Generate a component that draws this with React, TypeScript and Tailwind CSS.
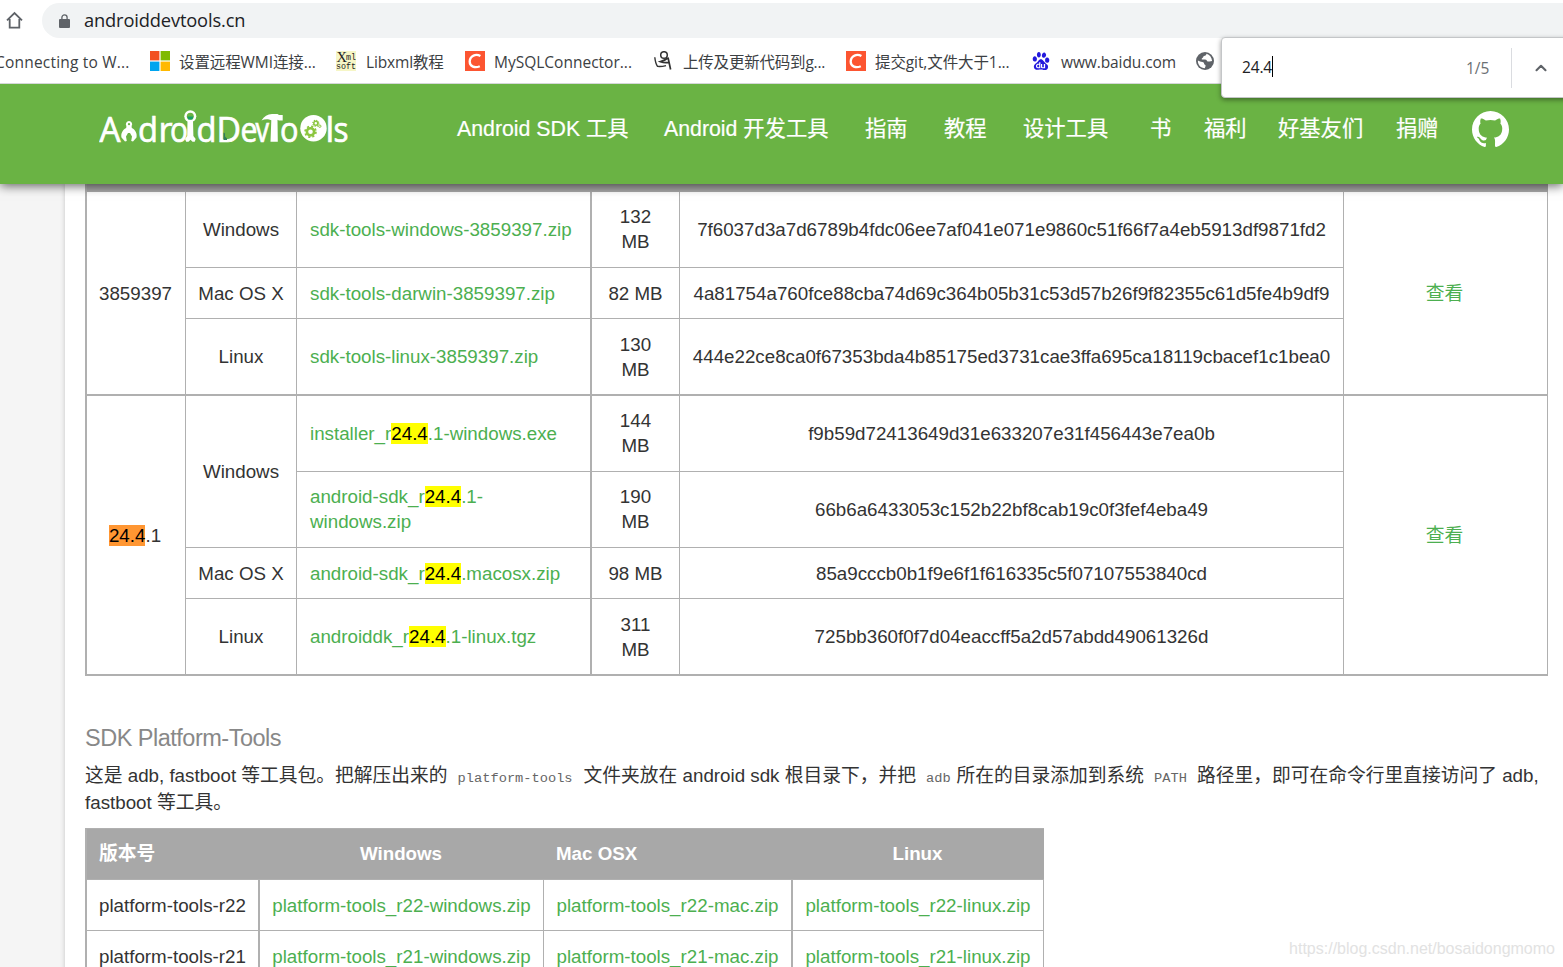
import type { ReactNode } from 'react';
import { SiGithub, SiBaidu } from 'react-icons/si';
import { ChevronUp } from 'lucide-react';

const bookmarks = [
  { label: '设置远程WMI连接...', icon: 'ms', box: 'w-[186px] gap-[9px]', text: 'tracking-[-0.1px]' },
  { label: 'Libxml教程', icon: 'xml', box: 'w-[129px] gap-[10px]', text: 'tracking-[-0.15px]' },
  { label: 'MySQLConnector...', icon: 'csdn', box: 'w-[189px] gap-[9px]', text: 'tracking-[0px]' },
  { label: '上传及更新代码到g...', icon: 'sketch', box: 'w-[192px] gap-[9px]', text: 'tracking-[-0.2px]' },
  { label: '提交git,文件大于1...', icon: 'csdn', box: 'w-[185px] gap-[9px]', text: 'tracking-[-0.1px]' },
  { label: 'www.baidu.com', icon: 'baidu', box: 'w-[165px] gap-[10px]', text: 'tracking-[-0.1px]' },
];

const navItems = [
  { label: 'Android SDK 工具', box: 'w-[207px]' },
  { label: 'Android 开发工具', box: 'w-[201px]' },
  { label: '指南', box: 'w-[79px]' },
  { label: '教程', box: 'w-[79px]' },
  { label: '设计工具', box: 'w-[127px]' },
  { label: '书', box: 'w-[54px]' },
  { label: '福利', box: 'w-[74px]' },
  { label: '好基友们', box: 'w-[118px]' },
  { label: '捐赠', box: 'w-[76px]' },
];

const platformTools = ['r22', 'r21'];

function BookmarkIcon({ name }: { name: string }) {
  if (name === 'ms') {
    return (
      <svg className="h-5 w-5 shrink-0" viewBox="0 0 20 20">
        <path d="M0 0h9.4v9.4H0z" fill="#f25022" />
        <path d="M10.6 0H20v9.4h-9.4z" fill="#7fba00" />
        <path d="M0 10.6h9.4V20H0z" fill="#00a4ef" />
        <path d="M10.6 10.6H20V20h-9.4z" fill="#ffb900" />
      </svg>
    );
  }
  if (name === 'xml') {
    return (
      <svg className="h-5 w-5 shrink-0 bg-[#f6f6c6]" viewBox="0 0 20 20" fill="#222">
        <text x="0.500" y="11" fontSize="14" fontFamily="Liberation Serif" textLength="10.500" lengthAdjust="spacingAndGlyphs">X</text>
        <text x="10" y="9" fontSize="9.500" fontFamily="Liberation Mono" textLength="10" lengthAdjust="spacingAndGlyphs">ml</text>
        <text x="0" y="18" fontSize="9.500" fontFamily="Liberation Mono" textLength="20" lengthAdjust="spacingAndGlyphs">soft</text>
      </svg>
    );
  }
  if (name === 'csdn') {
    return (
      <svg className="h-5 w-5 shrink-0" viewBox="0 0 20 20">
        <path d="M0 0h20v20H0z" fill="#fc5531" />
        <path d="M15.4 5.1C11 2.500 5 4.600 4.700 10.400c0 5.300 5.300 7 10.100 4.800" fill="none" stroke="#fff" strokeWidth="2.300" />
      </svg>
    );
  }
  if (name === 'sketch') {
    return (
      <svg className="h-5 w-5 shrink-0" viewBox="0 0 20 20" fill="none" stroke="#333">
        <circle cx="10" cy="4" r="3.300" strokeWidth="1.500" />
        <path d="M.8 6.200c.4 4 1.200 7 2.700 9.200 2.500.3 5.500 0 8.500-.8" strokeWidth="1.400" />
        <path d="M14 6.500 16.600 18.500M13.800 7C12 8.500 9 10 6.500 10.600c2.500 1 5.500 1.200 8.300.8" strokeWidth="1.700" />
      </svg>
    );
  }
  return <SiBaidu className="h-5 w-5 shrink-0 p-px text-[#2319dc]" />;
}

function Logo() {
  return (
    <svg
      className="h-10 w-[250px]"
      viewBox="99 108 250 40"
      fill="#fff"
      fontFamily="'Open Sans', sans-serif"
      fontSize="34.500"
    >
      <g stroke="#fff" strokeWidth="0.700">
        <text x="99.500" y="141.500" textLength="21" lengthAdjust="spacingAndGlyphs">A</text>
        <text x="138" y="141.500" textLength="20" lengthAdjust="spacingAndGlyphs">d</text>
        <text x="158.500" y="141.500">r</text>
        <text x="170" y="141.500" textLength="18" lengthAdjust="spacingAndGlyphs">o</text>
        <text x="196.500" y="141.500" textLength="20" lengthAdjust="spacingAndGlyphs">d</text>
        <text x="216.500" y="141.500" textLength="24.500" lengthAdjust="spacingAndGlyphs">D</text>
        <text x="240.500" y="141.500" textLength="17" lengthAdjust="spacingAndGlyphs">e</text>
        <text x="255.500" y="141.500" textLength="13.500" lengthAdjust="spacingAndGlyphs">v</text>
        <text x="280" y="141.500" textLength="18.500" lengthAdjust="spacingAndGlyphs">o</text>
        <text x="325.500" y="141.500">l</text>
        <text x="333.500" y="141.500" textLength="15" lengthAdjust="spacingAndGlyphs">s</text>
      </g>
      {/* pliers standing in for the n */}
      <path d="M129 121a3.200 3.200 0 0 0-2.600 5l-.2 2c-4 2-5.500 6-4.700 9.500l3.500 4 1.800-.4-.8-4.600 2-3.500h2l2 3.500-.8 4.600 1.800.4 3.500-4c.8-3.500-.7-7.500-4.700-9.500l-.2-2a3.200 3.200 0 0 0-2.600-5z" />
      <circle cx="129" cy="124.200" r="1.100" fill="#6ab344" />
      {/* wrench standing in for the i */}
      <path d="M187.500 120.500h5.500l.4 15.500 2.300 3-1 2.700h-2.200l-2-2-2 2h-2.300l-1.200-2.700 2.200-3z" />
      <circle cx="190.300" cy="116.300" r="6" />
      <circle cx="190.300" cy="116.300" r="3.500" fill="#6ab344" />
      <path d="M187.300 116.500h6l-1 3h-4z" fill="#16a06a" />
      <path d="M223.500 132.500l1.500 1v3l2 2v1.500h-3.500z" fill="#2f7d5c" />
      {/* hammer standing in for the T */}
      <path d="M261.500 120.500c2.500-4 6-6.300 10.500-6.500h5.500l1.500 1h3.700v5.500H279l-1.500-.8.300 22h-7.300l.8-21.500-2.300-.8c-2.500-.4-5-.2-7.500 1.100z" />
      <circle cx="313.500" cy="128.200" r="13.200" />
      <g fill="none" stroke="#8cc63f">
        <circle cx="310.500" cy="131.800" r="3.600" strokeWidth="2.600" />
        <circle cx="310.500" cy="131.800" r="5.400" strokeWidth="1.800" strokeDasharray="2.120 2.120" />
        <circle cx="315.800" cy="123.300" r="2" strokeWidth="1.500" />
        <circle cx="315.800" cy="123.300" r="3" strokeWidth="1.200" strokeDasharray="1.180 1.180" />
        <circle cx="319.800" cy="126.200" r="1.200" strokeWidth="1" />
      </g>
    </svg>
  );
}

function Cell({ className = '', children }: { className?: string; children: ReactNode }) {
  return (
    <div className={`flex items-center justify-center border-r border-b border-[#b0b0b0] px-3 text-center ${className}`}>
      <div>{children}</div>
    </div>
  );
}

function LinkCell({ className = '', children }: { className?: string; children: ReactNode }) {
  return (
    <div className={`flex items-center border-r-2 border-b border-[#b0b0b0] pl-[13px] text-[#4caf50] ${className}`}>
      <a href="#">{children}</a>
    </div>
  );
}

function Hit() {
  return <mark className="bg-[#ffff00] text-black">24.4</mark>;
}

function Code({ className, children }: { className: string; children: ReactNode }) {
  return (
    <code className={`font-['Liberation_Mono',monospace] text-[13.7px] leading-none text-[#666] ${className}`}>{children}</code>
  );
}

export default function App() {
  return (
    <div className="relative flex h-[967px] w-[1563px] flex-col overflow-hidden bg-[#f5f5f5] font-['Liberation_Sans','Noto_Sans_CJK_SC',sans-serif] text-[18.75px] leading-[25px] text-[#333]">
      {/* Browser toolbar */}
      <div className="relative z-20 h-[84px] shrink-0 border-b border-[#d5d7d9] bg-white font-['Open_Sans','Noto_Sans_CJK_SC',sans-serif]">
        <div className="flex h-[38px] items-start pt-[3px]">
          <svg className="mt-2 ml-[6px] h-[18px] w-[18px]" viewBox="0 0 18 18" fill="none" stroke="#5f6368" strokeWidth="1.800">
            <path d="M1 9.300 8.500 2 16 9.300M3.700 8v8.600h9.600V8" />
          </svg>
          <div className="ml-[18px] flex h-[35px] flex-1 items-center rounded-l-full bg-[#f1f3f4] pl-[17px] text-[#202124]">
            <svg className="h-[14px] w-[11px]" viewBox="0 0 11 14" fill="#5f6368">
              <path d="M1 5h9a1 1 0 0 1 1 1v7a1 1 0 0 1-1 1H1a1 1 0 0 1-1-1V6a1 1 0 0 1 1-1z" />
              <path d="M2.900 6V3.500a2.600 2.600 0 0 1 5.200 0V6" fill="none" stroke="#5f6368" strokeWidth="1.300" />
            </svg>
            <span className="mb-0.5 ml-[14px] text-[18.300px] tracking-[-0.15px]">androiddevtools.cn</span>
          </div>
        </div>
        <div className="flex h-[46px] items-center whitespace-nowrap text-[15.500px] text-[#3c4043]">
          <div className="ml-[-5px] w-[155px] pt-0.5 tracking-[0.2px]">Connecting to W...</div>
          {bookmarks.map((b) => (
            <div key={b.label} className={`flex shrink-0 items-center ${b.box}`}>
              <BookmarkIcon name={b.icon} />
              <span className={`pt-0.5 ${b.text}`}>{b.label}</span>
            </div>
          ))}
          <svg className="h-[18px] w-[18px] shrink-0" viewBox="0 0 18 18">
            <circle cx="9" cy="9" r="9" fill="#5f6368" />
            <path d="M10.500 1.800c-.3 1.700-1.300 2-2.500 2.200-.8.200-.6 1.600-1.600 1.900-1 .4-1 1.500.2 1.700 1.600.3 3.600-.3 4.200 1 .4 1.300 1.500 1 2.700.8.900-.1 1.700 0 2.600-.4-.3-3.600-2.500-6.300-5.600-7.200z" fill="#fff" />
            <path d="M1.900 8.500c1.400.9 3 1.400 4.400 1.600 1.400.2 2 1.100 1.800 2 .4.800 1.700.7 1.500 2l-.8 2.200c-4-.2-7.200-3.500-6.900-7.800z" fill="#fff" />
          </svg>
        </div>
      </div>

      {/* Find in page */}
      <div className="absolute top-[37px] left-[1221px] z-30 flex h-[61px] w-[360px] items-center rounded border border-[#c4c6c8] bg-white font-['Open_Sans',sans-serif] text-[15.500px] shadow-[0_2px_5px_rgba(0,0,0,0.4)]">
        <span className="ml-5 w-[224px] text-[#202124]">
          <span className="inline-block border-r border-black pt-px leading-5 tracking-[-0.15px]">24.4</span>
        </span>
        <span className="w-[45px] pt-0.5 text-[#6b6f73]">1/5</span>
        <span className="h-10 w-px bg-[#dadce0]" />
        <ChevronUp className="ml-5 h-[18px] w-[18px] text-[#5f6368]" strokeWidth={2.800} />
      </div>

      {/* Site header */}
      <header className="relative z-10 flex h-[100px] shrink-0 items-start bg-[#6ab344] pl-[99px] text-white shadow-[0_2px_10px_rgba(0,0,0,0.600)]">
        <div className="mt-6 w-[358px]">
          <Logo />
        </div>
        <nav className="flex pt-8 text-[21.300px] leading-[26px]">
          {navItems.map((item) => (
            <a key={item.label} href="#" className={`shrink-0 whitespace-nowrap [-webkit-text-stroke:0.2px_white] ${item.box}`}>
              {item.label}
            </a>
          ))}
        </nav>
        <SiGithub className="mt-[26px] h-[38px] w-[37px] shrink-0" />
      </header>

      <main className="ml-[65px] flex-1 bg-white pl-5 shadow-[0_0_5px_rgba(0,0,0,0.200)]">
        <div className="w-[1463px] border-l-2 border-[#b0b0b0]">
          <div className="h-2 bg-[#a8a8a8]" />
          <div className="grid grid-cols-[99px_111px_295px_88px_664px_204px] grid-rows-[76px_51px_77px_76px_76px_51px_77px]">
            <Cell className="row-span-3 border-b-2 pr-[13px]">3859397</Cell>
            <Cell>Windows</Cell>
            <LinkCell>sdk-tools-windows-3859397.zip</LinkCell>
            <Cell className="pb-px">132 MB</Cell>
            <Cell>7f6037d3a7d6789b4fdc06ee7af041e071e9860c51f66f7a4eb5913df9871fd2</Cell>
            <Cell className="row-span-3 border-b-2 pr-[14px] text-[#4caf50]">查看</Cell>
            <Cell className="whitespace-nowrap">Mac OS X</Cell>
            <LinkCell>sdk-tools-darwin-3859397.zip</LinkCell>
            <Cell>82 MB</Cell>
            <Cell>4a81754a760fce88cba74d69c364b05b31c53d57b26f9f82355c61d5fe4b9df9</Cell>
            <Cell className="border-b-2">Linux</Cell>
            <LinkCell className="border-b-2">sdk-tools-linux-3859397.zip</LinkCell>
            <Cell className="border-b-2">130 MB</Cell>
            <Cell className="border-b-2">444e22ce8ca0f67353bda4b85175ed3731cae3ffa695ca18119cbacef1c1bea0</Cell>

            <Cell className="row-span-4 border-b-2 pr-[14px]">
              <mark className="bg-[#ff9632] text-black">24.4</mark>.1
            </Cell>
            <Cell className="row-span-2">Windows</Cell>
            <LinkCell>installer_r<Hit />.1-windows.exe</LinkCell>
            <Cell className="pb-px">144 MB</Cell>
            <Cell>f9b59d72413649d31e633207e31f456443e7ea0b</Cell>
            <Cell className="row-span-4 border-b-2 pr-[14px] text-[#4caf50]">查看</Cell>
            <LinkCell className="pb-px">android-sdk_r<Hit />.1-<br />windows.zip</LinkCell>
            <Cell className="pb-px">190 MB</Cell>
            <Cell>66b6a6433053c152b22bf8cab19c0f3fef4eba49</Cell>
            <Cell className="whitespace-nowrap">Mac OS X</Cell>
            <LinkCell>android-sdk_r<Hit />.macosx.zip</LinkCell>
            <Cell>98 MB</Cell>
            <Cell>85a9cccb0b1f9e6f1f616335c5f07107553840cd</Cell>
            <Cell className="border-b-2">Linux</Cell>
            <LinkCell className="border-b-2">androiddk_r<Hit />.1-linux.tgz</LinkCell>
            <Cell className="border-b-2">311 MB</Cell>
            <Cell className="border-b-2">725bb360f0f7d04eaccff5a2d57abdd49061326d</Cell>
          </div>
        </div>

        <h4 className="mt-[47px] text-[23.500px] leading-[30px] tracking-[-0.5px] text-[#888]">SDK Platform-Tools</h4>
        <p className="mt-[9px] h-[54px] whitespace-nowrap leading-[27px]">
          这是 adb, fastboot 等工具包。把解压出来的
          <Code className="mr-[11px] ml-[10px]">platform-tools</Code>
          文件夹放在 android sdk 根目录下，并把
          <Code className="mr-[6px] ml-[10px]">adb</Code>
          所在的目录添加到系统
          <Code className="mx-[10px]">PATH</Code>
          路径里，即可在命令行里直接访问了 adb,
          <br />
          fastboot 等工具。
        </p>

        <div className="mt-3 w-[959px] border-l-2 border-[#b0b0b0]">
          <div className="grid h-[52px] grid-cols-[173px_284px_249px_251px] items-center border-t border-b border-[#b0b0b0] bg-[#a8a8a8] pb-0.5 font-bold text-white">
            <div className="pl-3">版本号</div>
            <div className="pr-0.5 text-center">Windows</div>
            <div className="pl-3">Mac OSX</div>
            <div className="pr-0.5 text-center">Linux</div>
          </div>
          {platformTools.map((rev) => (
            <div key={rev} className="grid h-[51px] grid-cols-[173px_284px_249px_251px]">
              <div className="flex items-center border-r-2 border-b border-[#b0b0b0] pl-3">platform-tools-{rev}</div>
              <Cell className="text-[#4caf50]">platform-tools_{rev}-windows.zip</Cell>
              <Cell className="border-r-2 text-[#4caf50]">platform-tools_{rev}-mac.zip</Cell>
              <Cell className="text-[#4caf50]">platform-tools_{rev}-linux.zip</Cell>
            </div>
          ))}
        </div>
      </main>

      <div className="absolute right-2 bottom-[8px] text-[16px] leading-5 text-[#e2e2e2]">
        https://blog.csdn.net/bosaidongmomo
      </div>
    </div>
  );
}
